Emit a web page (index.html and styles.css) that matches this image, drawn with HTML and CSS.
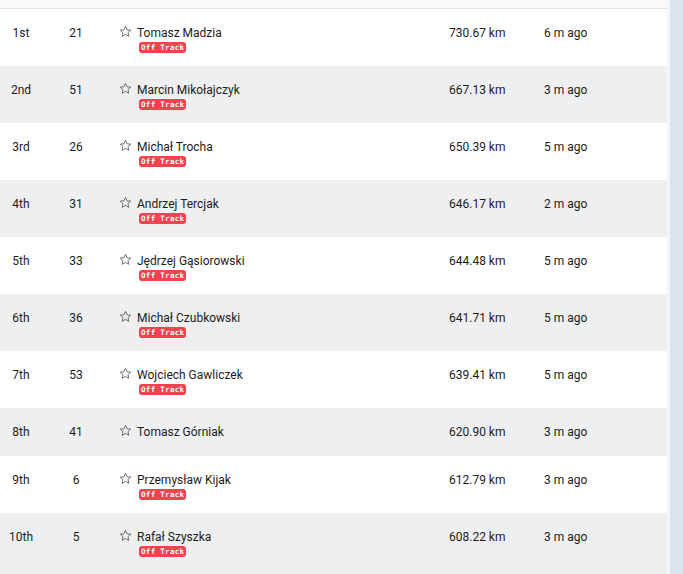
FILE: index.html
```html
<!DOCTYPE html>
<html>
<head>
<meta charset="utf-8">
<link rel="stylesheet" href="styles.css">
</head>
<body>
<div class="page">
  <div class="board">
    <div class="top"></div>
    <div class="rows">
      <div class="row">
        <div class="pos">1st</div><div class="num">21</div>
        <div class="rider"><svg class="star" viewBox="0 0 24 24"><path d="M12 2.5l2.9 6.3 6.8.7-5.1 4.6 1.5 6.8L12 17.4l-6.1 3.5 1.5-6.8-5.1-4.6 6.8-.7z"/></svg><div class="who"><div class="name">Tomasz Madzia</div><span class="badge">Off Track</span></div></div>
        <div class="dist">730.67 km</div><div class="ago">6 m ago</div>
      </div>
      <div class="row alt">
        <div class="pos">2nd</div><div class="num">51</div>
        <div class="rider"><svg class="star" viewBox="0 0 24 24"><path d="M12 2.5l2.9 6.3 6.8.7-5.1 4.6 1.5 6.8L12 17.4l-6.1 3.5 1.5-6.8-5.1-4.6 6.8-.7z"/></svg><div class="who"><div class="name">Marcin Mikołajczyk</div><span class="badge">Off Track</span></div></div>
        <div class="dist">667.13 km</div><div class="ago">3 m ago</div>
      </div>
      <div class="row">
        <div class="pos">3rd</div><div class="num">26</div>
        <div class="rider"><svg class="star" viewBox="0 0 24 24"><path d="M12 2.5l2.9 6.3 6.8.7-5.1 4.6 1.5 6.8L12 17.4l-6.1 3.5 1.5-6.8-5.1-4.6 6.8-.7z"/></svg><div class="who"><div class="name">Michał Trocha</div><span class="badge">Off Track</span></div></div>
        <div class="dist">650.39 km</div><div class="ago">5 m ago</div>
      </div>
      <div class="row alt">
        <div class="pos">4th</div><div class="num">31</div>
        <div class="rider"><svg class="star" viewBox="0 0 24 24"><path d="M12 2.5l2.9 6.3 6.8.7-5.1 4.6 1.5 6.8L12 17.4l-6.1 3.5 1.5-6.8-5.1-4.6 6.8-.7z"/></svg><div class="who"><div class="name">Andrzej Tercjak</div><span class="badge">Off Track</span></div></div>
        <div class="dist">646.17 km</div><div class="ago">2 m ago</div>
      </div>
      <div class="row">
        <div class="pos">5th</div><div class="num">33</div>
        <div class="rider"><svg class="star" viewBox="0 0 24 24"><path d="M12 2.5l2.9 6.3 6.8.7-5.1 4.6 1.5 6.8L12 17.4l-6.1 3.5 1.5-6.8-5.1-4.6 6.8-.7z"/></svg><div class="who"><div class="name">Jędrzej Gąsiorowski</div><span class="badge">Off Track</span></div></div>
        <div class="dist">644.48 km</div><div class="ago">5 m ago</div>
      </div>
      <div class="row alt">
        <div class="pos">6th</div><div class="num">36</div>
        <div class="rider"><svg class="star" viewBox="0 0 24 24"><path d="M12 2.5l2.9 6.3 6.8.7-5.1 4.6 1.5 6.8L12 17.4l-6.1 3.5 1.5-6.8-5.1-4.6 6.8-.7z"/></svg><div class="who"><div class="name">Michał Czubkowski</div><span class="badge">Off Track</span></div></div>
        <div class="dist">641.71 km</div><div class="ago">5 m ago</div>
      </div>
      <div class="row">
        <div class="pos">7th</div><div class="num">53</div>
        <div class="rider"><svg class="star" viewBox="0 0 24 24"><path d="M12 2.5l2.9 6.3 6.8.7-5.1 4.6 1.5 6.8L12 17.4l-6.1 3.5 1.5-6.8-5.1-4.6 6.8-.7z"/></svg><div class="who"><div class="name">Wojciech Gawliczek</div><span class="badge">Off Track</span></div></div>
        <div class="dist">639.41 km</div><div class="ago">5 m ago</div>
      </div>
      <div class="row alt">
        <div class="pos">8th</div><div class="num">41</div>
        <div class="rider"><svg class="star" viewBox="0 0 24 24"><path d="M12 2.5l2.9 6.3 6.8.7-5.1 4.6 1.5 6.8L12 17.4l-6.1 3.5 1.5-6.8-5.1-4.6 6.8-.7z"/></svg><div class="who"><div class="name">Tomasz Górniak</div></div></div>
        <div class="dist">620.90 km</div><div class="ago">3 m ago</div>
      </div>
      <div class="row">
        <div class="pos">9th</div><div class="num">6</div>
        <div class="rider"><svg class="star" viewBox="0 0 24 24"><path d="M12 2.5l2.9 6.3 6.8.7-5.1 4.6 1.5 6.8L12 17.4l-6.1 3.5 1.5-6.8-5.1-4.6 6.8-.7z"/></svg><div class="who"><div class="name">Przemysław Kijak</div><span class="badge">Off Track</span></div></div>
        <div class="dist">612.79 km</div><div class="ago">3 m ago</div>
      </div>
      <div class="row alt">
        <div class="pos">10th</div><div class="num">5</div>
        <div class="rider"><svg class="star" viewBox="0 0 24 24"><path d="M12 2.5l2.9 6.3 6.8.7-5.1 4.6 1.5 6.8L12 17.4l-6.1 3.5 1.5-6.8-5.1-4.6 6.8-.7z"/></svg><div class="who"><div class="name">Rafał Szyszka</div><span class="badge">Off Track</span></div></div>
        <div class="dist">608.22 km</div><div class="ago">3 m ago</div>
      </div>
    </div>
  </div>
  <div class="rail"></div>
</div>
</body>
</html>
```
FILE: styles.css
```css
html, body {
  margin: 0;
  padding: 0;
  height: 100%;
  overflow: hidden;
}
body {
  font-family: Roboto, "Liberation Sans", sans-serif;
  font-size: 12px;
  color: #1c1c1c;
  background: #ffffff;
}
.page {
  display: flex;
  height: 574px;
}
.board {
  width: 667px;
  border-right: 3px solid #f4f5f6;
  display: flex;
  flex-direction: column;
  background: #eeeff1;
}
.top {
  height: 8px;
  background: #fafafa;
  border-bottom: 1px solid #e2e2e2;
  flex: none;
}
.rail {
  flex: 1;
  background: #dde3ec;
}
.rows {
  flex: 1;
}
.row {
  display: grid;
  grid-template-columns: 42px 68px 339px 95px 1fr;
  align-items: start;
  padding: 15px 0;
  line-height: 18px;
  background: #ffffff;
}
.row.alt {
  background: #eeeff1;
}
.pos, .num {
  text-align: center;
}
.rider {
  display: flex;
  align-items: flex-start;
  padding-left: 9px;
}
.star {
  width: 13px;
  height: 13px;
  margin-top: 1px;
  margin-right: 5px;
  fill: none;
  stroke: #5a5a5a;
  stroke-width: 1.6;
  stroke-linejoin: round;
}
.who {
  display: flex;
  flex-direction: column;
  align-items: flex-start;
}
.badge {
  margin-top: 0;
  margin-bottom: -2px;
  margin-left: 2px;
  height: 11px;
  line-height: 11px;
  padding: 0 2px;
  border-radius: 3px;
  background: #f0434d;
  color: #ffffff;
  font-family: "DejaVu Sans Mono", "Liberation Mono", monospace;
  font-weight: bold;
  font-size: 7.5px;
  letter-spacing: 0.3px;
}
```
